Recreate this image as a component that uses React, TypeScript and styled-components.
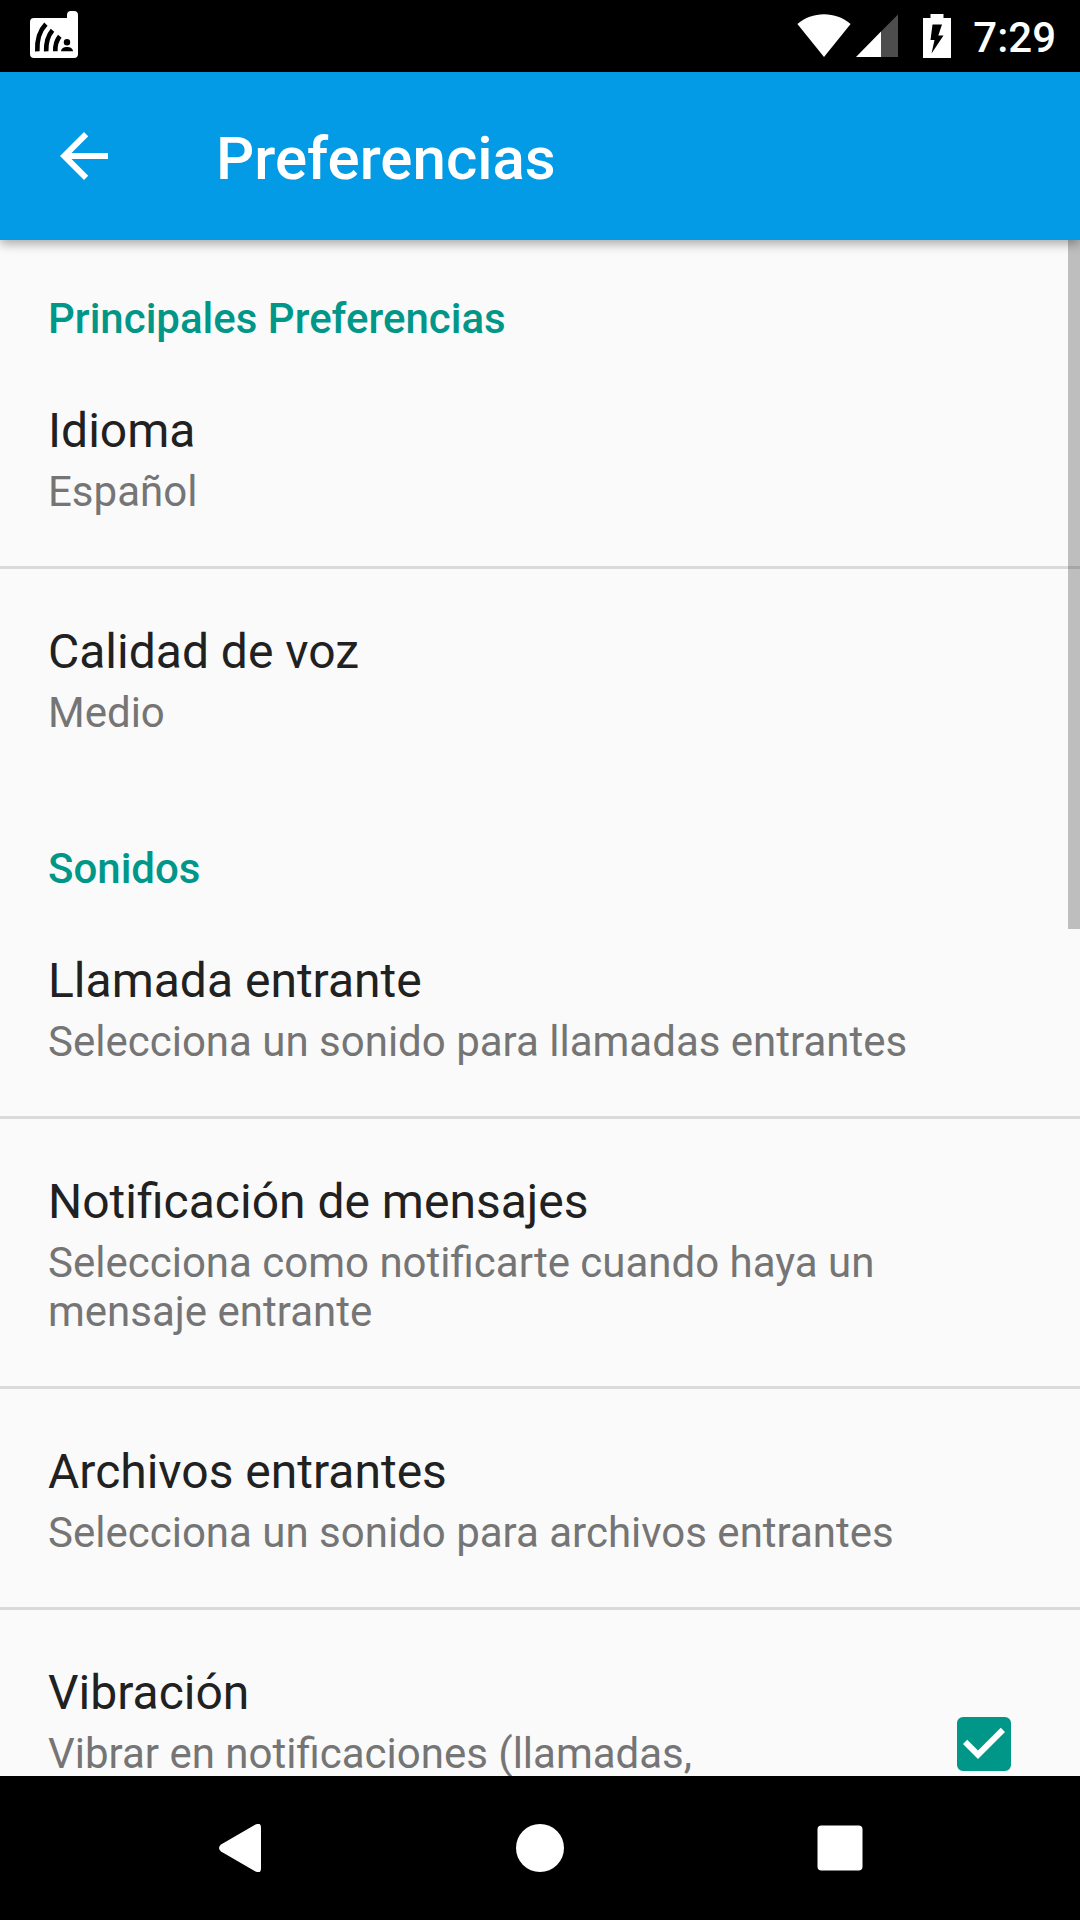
import React, { useState } from "react";
import styled, { createGlobalStyle } from "styled-components";

const GlobalStyle = createGlobalStyle`
  * { box-sizing: border-box; }
  body {
    margin: 0;
    background: #fafafa;
    font-family: Roboto, "Noto Sans", sans-serif;
  }
`;

const Screen = styled.div`
  display: flex;
  flex-direction: column;
  height: 100vh;
  overflow: hidden;
`;

const StatusBar = styled.header`
  display: flex;
  align-items: center;
  flex: none;
  height: 72px;
  padding: 0 24px 0 28px;
  background: #000;
  color: #fff;
`;

const StatusIcons = styled.div`
  display: flex;
  align-items: center;
  margin-left: auto;
`;

const Clock = styled.time`
  margin-left: 22px;
  padding-top: 3px;
  font-size: 42px;
  font-weight: 500;
  line-height: 49px;
`;

const Toolbar = styled.div`
  display: flex;
  align-items: center;
  flex: none;
  gap: 96px;
  height: 168px;
  padding: 0 48px;
  background: #039be5;
  color: #fff;
  box-shadow: 0 4px 10px rgba(0, 0, 0, 0.32);
  z-index: 1;
`;

const IconButton = styled.button`
  display: flex;
  align-items: center;
  justify-content: center;
  padding: 0;
  border: 0;
  background: none;
  color: inherit;
  cursor: pointer;
`;

const Title = styled.h1`
  margin: 0;
  padding-top: 6px;
  font-size: 60px;
  font-weight: 500;
  line-height: 70px;
`;

const Content = styled.main`
  position: relative;
  flex: 1;
  min-height: 0;
  overflow: hidden;
`;

const ScrollThumb = styled.div`
  position: absolute;
  top: 0;
  right: 0;
  width: 12px;
  height: 689px;
  background: rgba(0, 0, 0, 0.24);
`;

const SectionTitle = styled.h2`
  margin: 0;
  padding: 54px 48px 5px;
  color: #009688;
  font-size: 42px;
  font-weight: 500;
  line-height: 49px;
`;

const List = styled.ul`
  margin: 0;
  padding: 0;
  list-style: none;
`;

const Item = styled.li`
  border-bottom: 3px solid #dadada;

  &:last-child {
    border-color: transparent;
  }
`;

const Row = styled.button`
  display: flex;
  flex-direction: column;
  gap: 4px;
  width: 100%;
  padding: 51px 120px 50px 48px;
  border: 0;
  background: none;
  font-family: inherit;
  text-align: left;
  cursor: pointer;
`;

const CheckRow = styled.label`
  display: flex;
  align-items: center;
  justify-content: space-between;
  min-height: 267px;
  padding: 51px 69px 50px 48px;
  cursor: pointer;
`;

const CheckText = styled.span`
  display: flex;
  flex-direction: column;
  align-self: flex-start;
  gap: 4px;
`;

const Name = styled.span`
  color: #212121;
  font-size: 48px;
  line-height: 64px;
`;

const Summary = styled.span`
  color: #757575;
  font-size: 42px;
  line-height: 49px;
`;

const CheckBoxFrame = styled.span`
  display: grid;
  width: 54px;
  height: 54px;

  > * {
    grid-area: 1 / 1;
  }
`;

const CheckBox = styled.input`
  appearance: none;
  width: 54px;
  height: 54px;
  margin: 0;
  border: 6px solid #757575;
  border-radius: 6px;

  &:checked {
    border-color: #009688;
    background: #009688;
  }

  & + svg {
    visibility: hidden;
    pointer-events: none;
  }

  &:checked + svg {
    visibility: visible;
  }
`;

const NavBar = styled.nav`
  display: grid;
  grid-template-columns: repeat(3, 1fr);
  flex: none;
  height: 144px;
  padding: 0 90px;
  background: #000;
  color: #fff;
`;

const AppIcon = () => (
  <svg width="52" height="52" viewBox="28 10 52 52" aria-hidden="true">
    <path
      fill="#fff"
      d="M34 18H67V15Q67 11 71 11H74Q78 11 78 15V54Q78 58 74 58H34Q30 58 30 54V22Q30 18 34 18Z"
    />
    <g fill="none" stroke="#000" strokeWidth="4.6">
      <path d="M37.3 51.3C36.8 40 39.8 30.5 45.9 24.2" />
      <path d="M46.2 51.3C45.9 42.5 48 35.5 52.5 30.2" />
      <path d="M55.3 51.3C55.1 45 56.6 40 59.8 36.2" />
    </g>
    <circle cx="67" cy="42.2" r="3.2" />
    <path d="M61 51.3C61 45.4 73 45.4 73 51.3Z" />
  </svg>
);

const WifiIcon = () => (
  <svg width="54" height="44" viewBox="0 0 54 44" fill="currentColor" aria-hidden="true">
    <path d="M27 43L.4 10C8 3.7 17 .3 27 .3S46 3.7 53.6 10Z" />
  </svg>
);

const SignalIcon = styled.svg`
  margin-left: 5px;
`;

const BatteryIcon = styled.svg`
  margin-left: 25px;
`;

export default function App() {
  const [vibrate, setVibrate] = useState(true);

  return (
    <>
      <GlobalStyle />
      <Screen>
        <StatusBar>
          <AppIcon />
          <StatusIcons>
            <WifiIcon />
            <SignalIcon width="42" height="44" viewBox="0 0 42 44" aria-hidden="true">
              <path fill="#4d4d4d" d="M25 17.5L42 .5V43H25Z" />
              <path fill="#fff" d="M0 43L25 17.5V43Z" />
            </SignalIcon>
            <BatteryIcon width="28" height="44" viewBox="0 0 28 44" aria-hidden="true">
              <path fill="#fff" d="M7.5 0H20.5V4H28V44H0V4H7.5Z" />
              <path d="M9.5 10.5H19L15.3 21.5H20.5L8.5 39.5L11.5 26H7.5Z" />
            </BatteryIcon>
            <Clock>7:29</Clock>
          </StatusIcons>
        </StatusBar>

        <Toolbar>
          <IconButton type="button" aria-label="Atrás">
            <svg width="72" height="72" viewBox="0 0 24 24" fill="currentColor">
              <path d="M20 11H7.83l5.59-5.59L12 4l-8 8 8 8 1.41-1.41L7.83 13H20v-2z" />
            </svg>
          </IconButton>
          <Title>Preferencias</Title>
        </Toolbar>

        <Content>
          <SectionTitle>Principales Preferencias</SectionTitle>
          <List>
            <Item>
              <Row type="button">
                <Name>Idioma</Name>
                <Summary>Español</Summary>
              </Row>
            </Item>
            <Item>
              <Row type="button">
                <Name>Calidad de voz</Name>
                <Summary>Medio</Summary>
              </Row>
            </Item>
          </List>

          <SectionTitle>Sonidos</SectionTitle>
          <List>
            <Item>
              <Row type="button">
                <Name>Llamada entrante</Name>
                <Summary>Selecciona un sonido para llamadas entrantes</Summary>
              </Row>
            </Item>
            <Item>
              <Row type="button">
                <Name>Notificación de mensajes</Name>
                <Summary>Selecciona como notificarte cuando haya un mensaje entrante</Summary>
              </Row>
            </Item>
            <Item>
              <Row type="button">
                <Name>Archivos entrantes</Name>
                <Summary>Selecciona un sonido para archivos entrantes</Summary>
              </Row>
            </Item>
            <Item>
              <CheckRow htmlFor="vibrate">
                <CheckText>
                  <Name>Vibración</Name>
                  <Summary>Vibrar en notificaciones (llamadas,</Summary>
                </CheckText>
                <CheckBoxFrame>
                  <CheckBox
                    id="vibrate"
                    type="checkbox"
                    checked={vibrate}
                    onChange={(event) => setVibrate(event.target.checked)}
                  />
                  <svg width="54" height="54" viewBox="3 3 18 18" fill="#fff" aria-hidden="true">
                    <path d="M10 17l-5-5 1.41-1.41L10 14.17l7.59-7.59L19 8z" />
                  </svg>
                </CheckBoxFrame>
              </CheckRow>
            </Item>
          </List>
          <ScrollThumb />
        </Content>

        <NavBar>
          <IconButton type="button" aria-label="Volver">
            <svg width="42" height="48" viewBox="0 0 42 48" fill="currentColor">
              <path d="M36.5.6Q42-2 42 3.5V44.5Q42 50 36.5 47.4L2 27.5Q-2 24 2 20.5Z" />
            </svg>
          </IconButton>
          <IconButton type="button" aria-label="Inicio">
            <svg width="48" height="48" viewBox="0 0 48 48" fill="currentColor">
              <circle cx="24" cy="24" r="24" />
            </svg>
          </IconButton>
          <IconButton type="button" aria-label="Recientes">
            <svg width="46" height="46" viewBox="0 0 46 46" fill="currentColor">
              <rect x=".5" y=".5" width="45" height="45" rx="4" />
            </svg>
          </IconButton>
        </NavBar>
      </Screen>
    </>
  );
}
